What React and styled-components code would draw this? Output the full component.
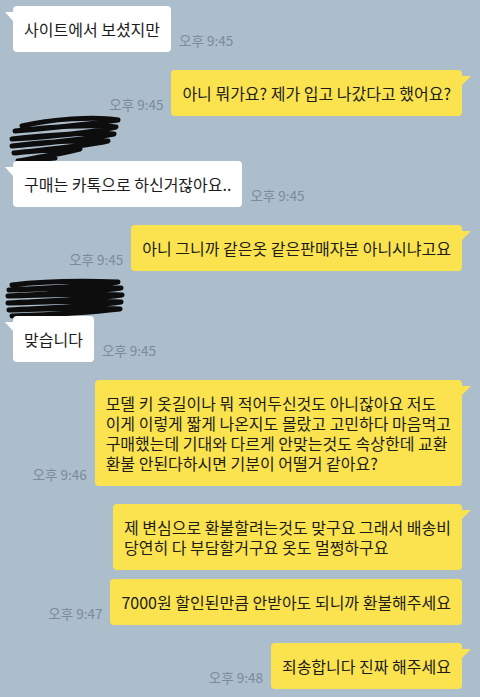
import styled, { createGlobalStyle } from "styled-components";

const GlobalStyle = createGlobalStyle`
  html, body {
    margin: 0;
    padding: 0;
    background: #acbdcc;
  }
  body {
    font-family: "Noto Sans CJK KR", "Noto Sans", sans-serif;
  }
`;

const Chat = styled.div`
  width: 480px;
  height: 697px;
  box-sizing: border-box;
  overflow: hidden;
  padding: 6px 18px 0 13px;
  display: flex;
  flex-direction: column;
  background: #acbdcc;
`;

const Row = styled.div`
  display: flex;
  align-items: flex-end;
  justify-content: ${(p) => (p.$mine ? "flex-end" : "flex-start")};
  gap: 8px;
  margin-top: ${(p) => p.$gap}px;
`;

const NameRow = styled.div`
  height: 27px;
  margin-top: ${(p) => p.$gap}px;
  display: flex;
  align-items: flex-start;
`;

const Scribble = styled.svg`
  display: block;
  overflow: visible;
`;

const Bubble = styled.div`
  position: relative;
  background: ${(p) => (p.$mine ? "#fae34f" : "#ffffff")};
  color: #1c1c1c;
  border-radius: 4px;
  padding: 13px 11px;
  font-size: 16px;
  line-height: 20px;
  white-space: nowrap;

  &::before {
    content: ${(p) => (p.$tail ? '""' : "none")};
    position: absolute;
    top: 6px;
    width: 0;
    height: 0;
    border-top: 9px solid ${(p) => (p.$mine ? "#fae34f" : "#ffffff")};
    ${(p) =>
      p.$mine
        ? "right: -9px; border-right: 9px solid transparent;"
        : "left: -8px; border-left: 8px solid transparent;"}
  }
`;

const Line = styled.span`
  display: block;
`;

const Time = styled.span`
  font-size: 13.5px;
  line-height: 15px;
  color: #7b8b9b;
  margin-bottom: 4px;
  white-space: nowrap;
`;

const scribbles = {
  a: {
    box: "13 133 130 27",
    d: "M22,125 C50,118 95,115 118,119 C95,123 50,127 15,130 C45,126 95,123 116,126 C90,132 45,136 12,138 C45,134 95,131 114,133 C85,139 45,142 12,145 C40,141 80,139 108,140 C80,146 40,149 14,152 C35,150 60,148 80,148 C60,153 35,157 18,160 C30,160 45,158 55,157",
  },
  b: {
    box: "13 289 130 27",
    d: "M12,285 C45,281 90,281 118,282 C85,287 40,288 9,290 C45,289 90,287 121,288 C85,293 40,294 8,296 C45,295 90,293 122,295 C85,300 40,301 8,303 C45,302 90,300 121,302 C85,307 40,308 9,310 C45,309 90,307 120,309 C85,313 40,315 12,316",
  },
};

const messages = [
  { id: 1, mine: false, tail: true, gap: 0, time: "오후 9:45", lines: ["사이트에서 보셨지만"] },
  { id: 2, mine: true, tail: true, gap: 18, time: "오후 9:45", lines: ["아니 뭐가요? 제가 입고 나갔다고 했어요?"] },
  { id: 3, mine: false, tail: true, gap: 18, name: "a", time: "오후 9:45", lines: ["구매는 카톡으로 하신거잖아요.."] },
  { id: 4, mine: true, tail: true, gap: 18, time: "오후 9:45", lines: ["아니 그니까 같은옷 같은판매자분 아니시냐고요"] },
  { id: 5, mine: false, tail: true, gap: 18, name: "b", time: "오후 9:45", lines: ["맞습니다"] },
  {
    id: 6,
    mine: true,
    tail: true,
    gap: 18,
    time: "오후 9:46",
    lines: [
      "모델 키 옷길이나 뭐 적어두신것도 아니잖아요 저도",
      "이게 이렇게 짧게 나온지도 몰랐고 고민하다 마음먹고",
      "구매했는데 기대와 다르게 안맞는것도 속상한데 교환",
      "환불 안된다하시면 기분이 어떨거 같아요?",
    ],
  },
  {
    id: 7,
    mine: true,
    tail: true,
    gap: 18,
    lines: ["제 변심으로 환불할려는것도 맞구요 그래서 배송비", "당연히 다 부담할거구요 옷도 멀쩡하구요"],
  },
  { id: 8, mine: true, tail: false, gap: 9, time: "오후 9:47", lines: ["7000원 할인된만큼 안받아도 되니까 환불해주세요"] },
  { id: 9, mine: true, tail: true, gap: 18, time: "오후 9:48", lines: ["죄송합니다 진짜 해주세요"] },
];

function Message({ msg }) {
  const scribble = msg.name && scribbles[msg.name];
  const bubble = (
    <Bubble $mine={msg.mine} $tail={msg.tail}>
      {msg.lines.map((l) => (
        <Line key={l}>{l}</Line>
      ))}
    </Bubble>
  );
  const time = msg.time && <Time>{msg.time}</Time>;

  return (
    <>
      {scribble && (
        <NameRow $gap={msg.gap}>
          <Scribble width="130" height="27" viewBox={scribble.box}>
            <path
              d={scribble.d}
              fill="none"
              stroke="#0d0d0d"
              strokeWidth="5"
              strokeLinecap="round"
              strokeLinejoin="round"
            />
          </Scribble>
        </NameRow>
      )}
      <Row $mine={msg.mine} $gap={scribble ? 0 : msg.gap}>
        {msg.mine ? (
          <>
            {time}
            {bubble}
          </>
        ) : (
          <>
            {bubble}
            {time}
          </>
        )}
      </Row>
    </>
  );
}

export default function App() {
  return (
    <>
      <GlobalStyle />
      <Chat>
        {messages.map((m) => (
          <Message key={m.id} msg={m} />
        ))}
      </Chat>
    </>
  );
}
